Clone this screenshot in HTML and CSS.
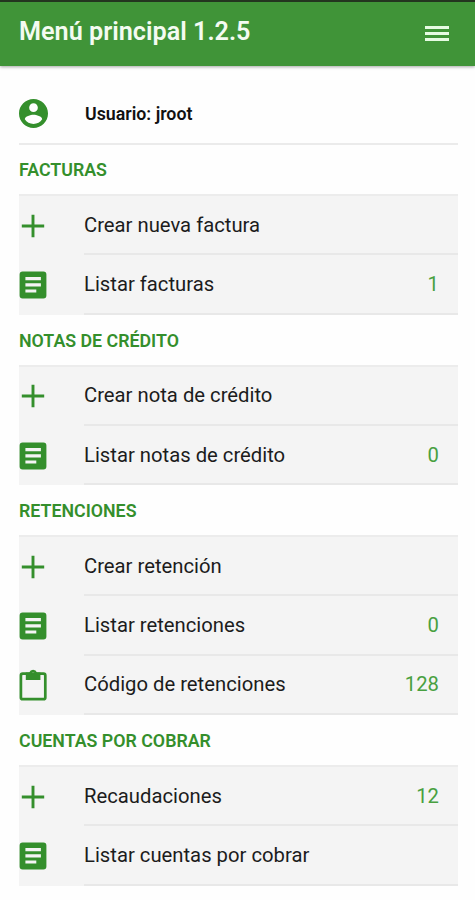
FILE: index.html
```html
<!DOCTYPE html>
<html lang="es">
<head>
    <meta charset="UTF-8">
    <meta name="viewport" content="width=device-width, initial-scale=1.0">
    <title>Menú principal</title>
    <link rel="stylesheet" href="styles.css">
</head>
<body>
    <!-- shared icons -->
    <svg class="sprite">
        <symbol id="plus" viewBox="0 0 28 28">
            <path d="M14 2.8v22.4M2.8 14h22.4" fill="none" stroke="currentColor" stroke-width="2.9"/>
        </symbol>
        <symbol id="article" viewBox="0 0 28 28">
            <path fill="currentColor" fill-rule="evenodd" d="M3.6 .6h20.8a3 3 0 0 1 3 3v20.8a3 3 0 0 1-3 3H3.6a3 3 0 0 1-3-3V3.6a3 3 0 0 1 3-3zM6.4 6v3.2h15.5V6zM6.4 12.2v3.2h15.5v-3.2zM6.4 18.4v3.2h10.9v-3.2z"/>
        </symbol>
        <symbol id="clipboard" viewBox="0 0 28 32">
            <rect x="1.9" y="4.6" width="24.4" height="25.6" rx="1.8" fill="none" stroke="currentColor" stroke-width="2.7"/>
            <path fill="currentColor" fill-rule="evenodd" d="M6.8 3.4h3.4a4.2 4.2 0 0 1 7.8 0h3.4v7.6H6.8zM14.1 2.9a1.5 1.5 0 1 0 0 3a1.5 1.5 0 1 0 0-3z"/>
        </symbol>
    </svg>

    <header class="navbar">
        <h1>Menú principal 1.2.5</h1>
        <button class="menu-btn" aria-label="Menú">
            <span></span>
            <span></span>
            <span></span>
        </button>
    </header>

    <main class="container">
        <div class="user">
            <svg class="avatar" viewBox="2 2 20 20">
                <path fill="currentColor" d="M12 2C6.48 2 2 6.48 2 12s4.48 10 10 10 10-4.48 10-10S17.52 2 12 2zm0 3c1.66 0 3 1.34 3 3s-1.34 3-3 3-3-1.34-3-3 1.34-3 3-3zm0 14.2c-2.5 0-4.71-1.28-6-3.22.03-1.99 4-3.08 6-3.08 1.99 0 5.97 1.09 6 3.08-1.29 1.94-3.5 3.22-6 3.22z"/>
            </svg>
            <span>Usuario: jroot</span>
        </div>

        <h2>FACTURAS</h2>
        <ul class="list">
            <li><svg class="icon"><use href="#plus"/></svg><div class="item"><span>Crear nueva factura</span></div></li>
            <li><svg class="icon"><use href="#article"/></svg><div class="item"><span>Listar facturas</span><span class="count">1</span></div></li>
        </ul>

        <h2>NOTAS DE CRÉDITO</h2>
        <ul class="list">
            <li><svg class="icon"><use href="#plus"/></svg><div class="item"><span>Crear nota de crédito</span></div></li>
            <li><svg class="icon"><use href="#article"/></svg><div class="item"><span>Listar notas de crédito</span><span class="count">0</span></div></li>
        </ul>

        <h2>RETENCIONES</h2>
        <ul class="list">
            <li><svg class="icon"><use href="#plus"/></svg><div class="item"><span>Crear retención</span></div></li>
            <li><svg class="icon"><use href="#article"/></svg><div class="item"><span>Listar retenciones</span><span class="count">0</span></div></li>
            <li><svg class="icon tall"><use href="#clipboard"/></svg><div class="item"><span>Código de retenciones</span><span class="count">128</span></div></li>
        </ul>

        <h2>CUENTAS POR COBRAR</h2>
        <ul class="list">
            <li><svg class="icon"><use href="#plus"/></svg><div class="item"><span>Recaudaciones</span><span class="count">12</span></div></li>
            <li><svg class="icon"><use href="#article"/></svg><div class="item"><span>Listar cuentas por cobrar</span></div></li>
        </ul>
    </main>
</body>
</html>
```
FILE: styles.css
```css
*{
    box-sizing: border-box;
}
body{
    margin:0;
    background-color: #fefefe;
    font-family: Roboto, "Liberation Sans", sans-serif;
    color:#1c1c1c;
}
.sprite{
    display: none;
}
.navbar{
    display: flex;
    justify-content: space-between;
    height:66px;
    padding:0 26px 0 19px;
    border-top:2px solid #23351f;
    background-color: #409438;
    box-shadow: 0 1px 3px rgba(0,0,0,0.35);
}
.navbar h1{
    margin:0;
    color:#f4fbf1;
    font-size:25.2px;
    font-weight:600;
    line-height:60px;
}
.menu-btn{
    display: flex;
    flex-direction: column;
    gap:3px;
    width:24px;
    margin-top:24px;
    padding:0;
    border:none;
    background: transparent;
}
.menu-btn span{
    width:24px;
    height:3px;
    background-color: #e6fbe2;
}
.container{
    padding:17px 17px 0 19px;
}
.user{
    display: flex;
    align-items: center;
    height:62px;
    margin-bottom:-1px;
    border-bottom:2px solid #ebebeb;
    color:#111;
    font-size:17.8px;
    font-weight:600;
}
.avatar{
    width:29px;
    height:29px;
    margin-right:37px;
    color:#348f2c;
}
h2{
    margin:0;
    height:50px;
    color:#348f2c;
    font-size:17.8px;
    font-weight:600;
    line-height:51px;
}
.list{
    margin:0;
    padding:0;
    list-style: none;
    border-top:2px solid #ececec;
    background-color: #f4f4f4;
}
.list li{
    display: flex;
    align-items: center;
    height:59.3px;
}
.icon{
    width:28px;
    height:28px;
    margin-right:37px;
    color:#348f2c;
}
.icon.tall{
    height:32px;
}
.item{
    flex:1;
    display: flex;
    align-items: center;
    justify-content: space-between;
    height:100%;
    padding-right:19px;
    border-bottom:2px solid #e8e8e8;
    font-size:20.25px;
}
.count{
    color:#48a040;
}
```
